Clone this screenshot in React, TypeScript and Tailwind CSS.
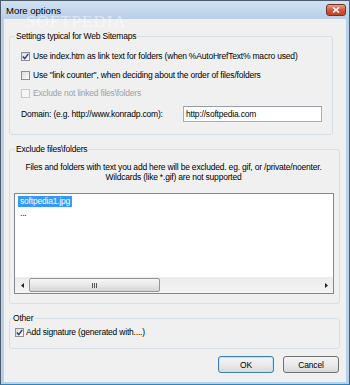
import React from "react";

const txt = "font-['Liberation_Sans',Arial,sans-serif] text-[8.5px] tracking-[-0.2px] leading-[10px]";

function CheckBox({ checked, disabled }: { checked?: boolean; disabled?: boolean }) {
  return (
    <span
      className={`w-[9px] h-[9px] shrink-0 border flex items-center justify-center ${
        disabled
          ? "border-[#c8c8c8] bg-[#f6f6f6]"
          : "border-[#8e8f8f] bg-linear-to-br from-[#dcdcdc] to-[#fdfdfd]"
      }`}
    >
      {checked && (
        <svg width="7" height="7" viewBox="0 0 7 7" fill="none">
          <path d="M0.8 3.6L2.7 5.6L6.3 0.9" stroke="#27398e" strokeWidth="1.4" />
        </svg>
      )}
    </span>
  );
}

function Group({
  label,
  legendClass,
  className,
  children,
}: {
  label: string;
  legendClass: string;
  className: string;
  children: React.ReactNode;
}) {
  return (
    <fieldset className={`border border-[#d5dfe5] rounded-[3px] ${className}`}>
      <legend className={`px-[1px] ${legendClass}`}>{label}</legend>
      {children}
    </fieldset>
  );
}

function Button({ label, primary }: { label: string; primary?: boolean }) {
  return (
    <button
      className={`w-[56px] h-[17px] rounded-[3px] border flex items-center justify-center bg-linear-to-b from-[#f4f4f4] via-[#ebebeb] to-[#d9d9d9] ${
        primary ? "border-[#3c7fb1] shadow-[inset_0_0_0_1px_#bfe3f8]" : "border-[#707070]"
      }`}
    >
      {label}
    </button>
  );
}

export default function App() {
  return (
    <div className={`${txt} text-black w-[350px] h-[385px] flex flex-col bg-[#b9d0e9] border border-[#4d5b6b] border-b-[#2a86c0] relative overflow-hidden`}>
      {/*title bar*/}
      <div className="h-[18px] shrink-0 flex items-center justify-between pl-[5px] pr-[3px] bg-linear-to-b from-[#d0e1f3] to-[#b8cfe8]">
        <span className="text-[9.5px] tracking-normal leading-[9px]">More options</span>
        <div className="w-[20px] h-[12px] rounded-[3px] border border-[#7a2e22] bg-linear-to-b from-[#e8a08c] via-[#d2573c] to-[#c0442a] flex items-center justify-center">
          <svg width="8" height="6" viewBox="0 0 8 6" fill="none">
            <path d="M1 0.5L7 5.5M7 0.5L1 5.5" stroke="white" strokeWidth="1.6" />
          </svg>
        </div>
      </div>

      {/*watermark*/}
      <div className="absolute left-[25px] top-[14px] font-['Liberation_Serif',serif] text-[17px] tracking-[1px] leading-[13px] text-white/50 pointer-events-none">
        SOFTPEDIA
      </div>

      {/*client area*/}
      <div className="flex-1 mx-[3px] mb-[2px] bg-[#f0f0f0] flex flex-col">
        {/*settings group*/}
        <Group label="Settings typical for Web Sitemaps" legendClass="ml-[5px]" className="mt-[12px] ml-[5px] w-[324px]">
          <div className="pl-[11px] pt-[9px] pb-[12px] flex flex-col">
            <div className="h-[12px] flex items-center gap-[3px]">
              <CheckBox checked />
              <span>Use index.htm as link text for folders (when %AutoHrefText% macro used)</span>
            </div>
            <div className="h-[12px] mt-[7px] flex items-center gap-[3px]">
              <CheckBox />
              <span>Use "link counter", when deciding about the order of files/folders</span>
            </div>
            <div className="h-[12px] mt-[6px] flex items-center gap-[3px] text-[#a0a0a0]">
              <CheckBox disabled />
              <span>Exclude not linked files\folders</span>
            </div>
            <div className="h-[16px] mt-[7px] flex items-center">
              <span className="w-[162px]">Domain: (e.g. http://www.konradp.com):</span>
              <div className="w-[139px] h-[16px] bg-white border border-[#abadb3] border-t-[#9a9ca3] flex items-center pl-[2px]">
                http://softpedia.com
              </div>
            </div>
          </div>
        </Group>

        {/*exclude group*/}
        <Group label="Exclude files\folders" legendClass="ml-[5px]" className="mt-[9px] ml-[5px] w-[331px]">
          <div className="pl-[4px] pt-[8px] pb-[9px] flex flex-col">
            <p className="text-center pr-[6px]">
              Files and folders with text you add here will be excluded. eg. gif, or /private/noenter.
              <br />
              Wildcards (like *.gif) are not supported
            </p>
            <div className="mt-[11px] w-[320px] h-[101px] bg-white border border-[#828790] flex flex-col">
              <div className="flex-1 pl-[3px] pt-[2px] flex flex-col items-start">
                <span className="h-[11px] px-[2px] bg-[#3399ff] text-white leading-[11px]">softpedia1.jpg</span>
                <span className="h-[11px] px-[2px] mt-[1px] leading-[11px]">...</span>
              </div>
              <div className="h-[16px] bg-linear-to-b from-[#ececec] to-[#f4f4f4] flex items-center">
                <div className="w-[14px] flex justify-center">
                  <svg width="3" height="5" viewBox="0 0 3 5">
                    <path d="M3 0L0 2.5L3 5Z" fill="#222" />
                  </svg>
                </div>
                <div className="w-[131px] h-[14px] rounded-[2px] border border-[#959595] bg-linear-to-b from-[#f6f6f6] via-[#e8e8e8] to-[#d4d4d4] flex items-center justify-center">
                  <svg width="6" height="5" viewBox="0 0 6 5">
                    <path d="M0.5 0V5M2.5 0V5M4.5 0V5" stroke="#555" strokeWidth="1" />
                  </svg>
                </div>
                <div className="flex-1" />
                <div className="w-[14px] flex justify-center">
                  <svg width="3" height="5" viewBox="0 0 3 5">
                    <path d="M0 0L3 2.5L0 5Z" fill="#222" />
                  </svg>
                </div>
              </div>
            </div>
          </div>
        </Group>

        {/*other group*/}
        <Group label="Other" legendClass="ml-[2px]" className="mt-[9px] ml-[5px] w-[331px]">
          <div className="pl-[5px] pt-[3px] pb-[10px]">
            <div className="h-[12px] flex items-center gap-[2px]">
              <CheckBox checked />
              <span>Add signature (generated with....)</span>
            </div>
          </div>
        </Group>

        {/*buttons*/}
        <div className="mt-[7px] pr-[7px] flex justify-end gap-[9px]">
          <Button label="OK" primary />
          <Button label="Cancel" />
        </div>
      </div>
    </div>
  );
}
